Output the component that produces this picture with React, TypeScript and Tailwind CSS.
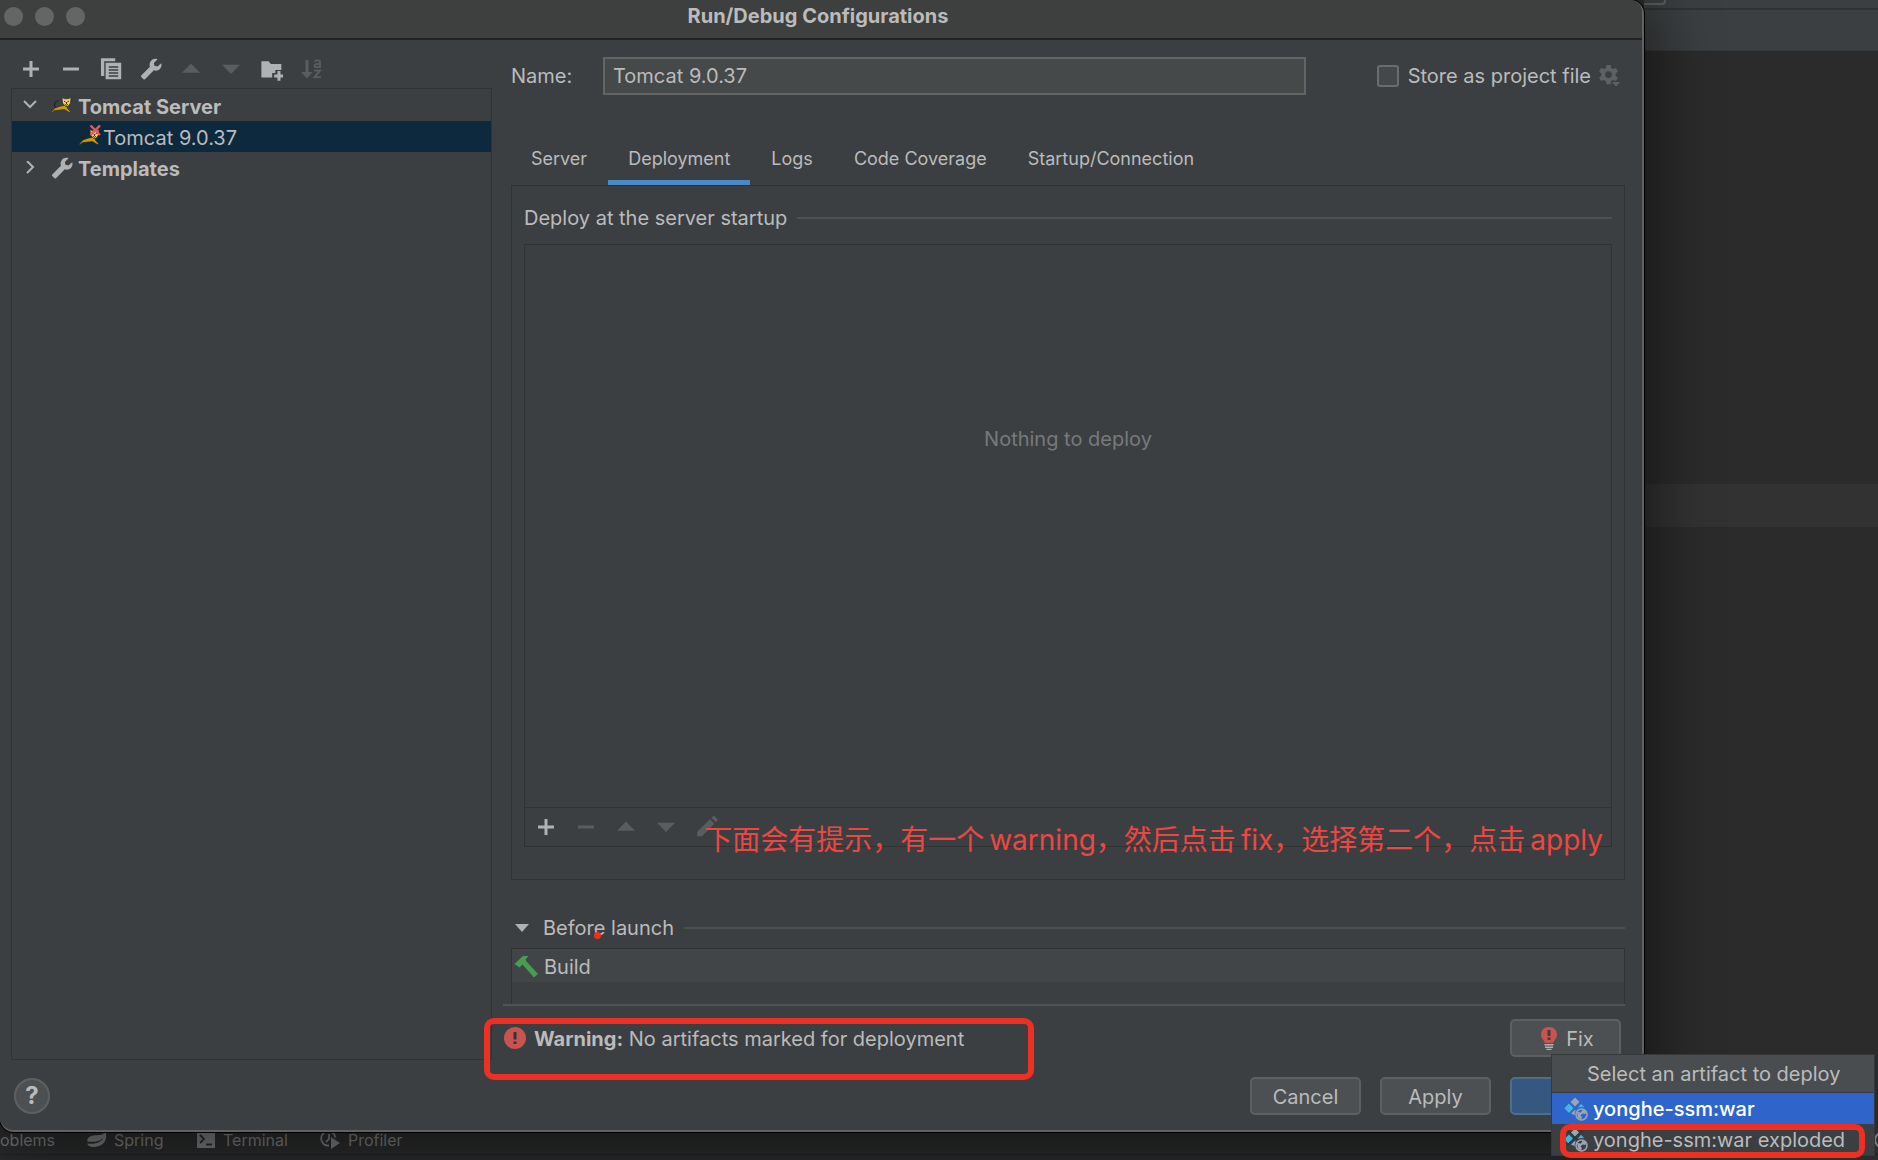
import { useState } from 'react';
import type { ReactNode } from 'react';
import { clsx } from 'clsx';

const TABS = ['Server', 'Deployment', 'Logs', 'Code Coverage', 'Startup/Connection'];
const ARTIFACTS = ['yonghe-ssm:war', 'yonghe-ssm:war exploded'];

type IconProps = { className?: string };

function Icon({ className, children }: IconProps & { children: ReactNode }) {
  return (
    <svg viewBox="0 0 16 16" className={clsx('size-6 shrink-0', className)} fill="currentColor" aria-hidden="true">
      {children}
    </svg>
  );
}

const PlusIcon = ({ className }: IconProps) => (
  <Icon className={className}><path d="M7 2.700h2V7h4.300v2H9v4.300H7V9H2.700V7H7z" /></Icon>
);
const MinusIcon = ({ className }: IconProps) => (
  <Icon className={className}><path d="M2.700 7h10.600v2H2.700z" /></Icon>
);
const CopyIcon = () => (
  <Icon>
    <path d="M1.300.9h9.500v2H3.500v9.700H1.300z" />
    <path fillRule="evenodd" d="M4.400 3.900h10.400v10.900H4.400zM6.500 6.200v.9h6.300v-.9zm0 2v.9h6.300v-.9zm0 2v.9h6.300v-.9zm0 2v.9h6.300v-.9z" />
  </Icon>
);
const WrenchIcon = () => (
  <Icon>
    <path d="M14.800 4.100l-2.500 2.300-2-.5-.4-1.900L12.400 1.500C10.700.8 8.900 1.300 7.900 2.600c-.9 1.200-1.100 2.600-.6 3.900L1.500 12.300c-.3.3-.3.700 0 1l1.500 1.500c.3.3.7.3 1 0L9.900 8.900c1.400.5 2.900.2 4-.9 1-1.100 1.400-2.600.9-3.900z" />
  </Icon>
);
const UpIcon = () => (
  <Icon><path d="M8 4.400l6 6.100H2z" /></Icon>
);
const DownIcon = () => (
  <Icon><path d="M8 11.300l6-6.100H2z" /></Icon>
);
const FolderAddIcon = () => (
  <Icon>
    <path d="M1.600 2.800h4.800l1.500 1.800h7v4h-4v2H8.800v3H1.600z" />
    <path d="M12.300 9.400h2v2.200h2.100v2h-2.100v2.200h-2v-2.200h-2.200v-2h2.200z" />
  </Icon>
);
const SortIcon = () => (
  <svg viewBox="0 0 24 24" className="size-6 shrink-0" aria-hidden="true">
    <path fill="currentColor" d="M6.500 3h3v12h4L8 21.500 2 15h4.500z" />
    <g fill="none" stroke="currentColor" strokeWidth="1.800">
      <path d="M15.500 4.200q3-1.800 5.500 0v6.800M21 7q-5.500-.5-5.500 1.700c0 2.200 4.500 1.900 5.500.2M15 13.700h6l-5.500 6.400H22" />
    </g>
  </svg>
);
const PencilIcon = () => (
  <Icon><path d="M11.600 1.900l1.600-1.500L16 3.200l-1.500 1.600zM10.600 2.900l2.900 2.900-8.200 8.300H2.100v-2.900z" /></Icon>
);

function TomcatIcon({ failed = false }: { failed?: boolean }) {
  return (
    <svg viewBox="0 0 24 24" className="size-6 shrink-0" fill="none" aria-hidden="true">
      <path d="M8 15C3.500 14 3 9 8.500 7.500" stroke="#222" strokeWidth="1.200" />
      <path d="M1 19.500l4-4.500 6-2 6-1 .5 3.500 3.500 3.500-2 .2-4.500-2.700-5 .5-5 .5-2 1.700z" fill="#c99a17" stroke="#3b2c0c" strokeWidth=".6" />
      <path d="M12 4.500l2.500 1.200h3.500l3-1.200-.5 5.500-2.500 3.500h-2.500l-3-3.500z" fill="#f0d264" stroke="#2b2b2b" strokeWidth=".7" />
      <path d="M14 8l1.500 1M19 8l-1.500 1M15 11.500l1.500.8 1.500-.8M16.500 9v2" stroke="#443008" />
      {failed && <path d="M12.500 0.500l9.500 9.500M22 .5L12.500 10" stroke="#e55765" strokeWidth="2.400" />}
    </svg>
  );
}

function ArtifactIcon({ exploded }: { exploded: boolean }) {
  return (
    <svg viewBox="0 0 24 24" className="size-6 shrink-0" fill="none" aria-hidden="true">
      <path d="M11 .5l4.500 4.500L11 9.500 6.500 5z" fill="#9aa7b0" />
      <path d="M5 6.500l4.500 4.700L5 16 .3 11.200z" fill="#40b6e0" />
      <path d="M17 6.800l3.500 3.700c-3-.8-5-.4-7 .5z" fill="#40b6e0" />
      <path d="M11 12.800l.6.600c-.8 1.500-1 3-.8 4.800L7 16.500z" fill="#9aa7b0" />
      {exploded && <path d="M4 2.500l14 14M18 2.500L3.500 17" stroke="#303335" strokeWidth="1.400" />}
      <circle cx="17.500" cy="17.500" r="5.500" stroke="#9aa7b0" strokeWidth="1.500" />
      <path d="M13 15l4 .5 1.500-3 3.500 2-.5 2.500-3-.5-2 2 1.500 1.500-1 2.500-3-2z" fill="#9aa7b0" />
    </svg>
  );
}

function ToolButton({ label, disabled, children }: { label: string; disabled?: boolean; children: ReactNode }) {
  return (
    <button
      type="button"
      aria-label={label}
      disabled={disabled}
      className="text-[#afb1b3] disabled:text-[#5b5c5d]"
    >
      {children}
    </button>
  );
}

function Sidebar() {
  return (
    <aside className="flex w-[481px] shrink-0 flex-col">
      <div className="flex gap-4 px-2">
        <ToolButton label="Add"><PlusIcon /></ToolButton>
        <ToolButton label="Remove"><MinusIcon /></ToolButton>
        <ToolButton label="Copy"><CopyIcon /></ToolButton>
        <ToolButton label="Edit templates"><WrenchIcon /></ToolButton>
        <ToolButton label="Move up" disabled><UpIcon /></ToolButton>
        <ToolButton label="Move down" disabled><DownIcon /></ToolButton>
        <ToolButton label="New folder"><FolderAddIcon /></ToolButton>
        <ToolButton label="Sort" disabled><SortIcon /></ToolButton>
      </div>
      <ul className="mt-[7px] flex-1 border border-[#323232]">
        <li className="flex h-8 items-center pl-[11px] font-bold">
          <svg viewBox="0 0 14 14" className="mr-[13px] size-[14px]" fill="none" stroke="#afb1b3" strokeWidth="2">
            <path d="M1 3l6 6 6-6" />
          </svg>
          <TomcatIcon />
          <span className="ml-1 pt-[3px]">Tomcat Server</span>
        </li>
        <li className="flex h-[31px] items-center bg-[#0d293e] pl-[66px]">
          <TomcatIcon failed />
          <span className="ml-px pt-[3px]">Tomcat 9.0.37</span>
        </li>
        <li className="flex h-[31px] items-center pl-[11px] font-bold">
          <svg viewBox="0 0 14 14" className="mr-[13px] size-[14px]" fill="none" stroke="#afb1b3" strokeWidth="2">
            <path d="M4 0l6 6-6 6" />
          </svg>
          <span className="text-[#afb1b3]"><WrenchIcon /></span>
          <span className="ml-1 pt-[3px]">Templates</span>
        </li>
      </ul>
    </aside>
  );
}

function NameRow() {
  const [name, setName] = useState('Tomcat 9.0.37');
  return (
    <div className="flex h-[38px] items-center pr-[3px]">
      <label htmlFor="config-name" className="w-[92px] shrink-0">Name:</label>
      <input
        id="config-name"
        value={name}
        onChange={e => setName(e.target.value)}
        className="h-full min-w-0 flex-1 border-2 border-[#646464] bg-[#45494a] px-2 outline-none"
      />
      <label className="ml-[71px] flex items-center gap-[9px]">
        <input type="checkbox" className="size-[22px] appearance-none rounded-[3px] border-2 border-[#6b6b6b] bg-[#43494a]" />
        Store as project file
      </label>
      <button type="button" aria-label="Storage settings" disabled className="ml-[7px] text-[#5e6163]">
        <svg viewBox="0 0 24 24" className="size-6" aria-hidden="true">
          <path
            fill="currentColor"
            fillRule="evenodd"
            d="M8.500 1h4l.6 3 1.900 1.100 2.900-1 2 3.400-2.300 2v2.200l2.300 2-2 3.400-2.900-1-1.900 1.100-.6 3h-4l-.6-3L6 16.100l-2.900 1-2-3.400 2.300-2V9.500l-2.300-2 2-3.400 2.900 1L7.900 4zM10.500 7.200a3.400 3.400 0 100 6.800 3.400 3.400 0 000-6.800z"
          />
          <path fill="currentColor" stroke="#3c3f41" d="M13 17.500h10L18 23z" />
        </svg>
      </button>
    </div>
  );
}

function DeploymentPanel() {
  return (
    <section className="flex flex-1 flex-col border border-[#323232] px-3 pt-3 pb-8">
      <div className="flex h-10 items-center gap-[10px]">
        <h2>Deploy at the server startup</h2>
        <div className="h-[2px] flex-1 bg-[#4d5052]" />
      </div>
      <div className="mt-[6px] flex flex-1 flex-col border border-[#323232]">
        <p className="flex-1 pt-[182px] text-center text-[#777a7b]">Nothing to deploy</p>
        <div className="relative flex h-[39px] items-center gap-4 border-t border-[#323232] px-[9px]">
          <ToolButton label="Add artifact"><PlusIcon /></ToolButton>
          <ToolButton label="Remove artifact" disabled><MinusIcon /></ToolButton>
          <ToolButton label="Artifact up" disabled><UpIcon /></ToolButton>
          <ToolButton label="Artifact down" disabled><DownIcon /></ToolButton>
          <ToolButton label="Edit artifact" disabled><PencilIcon /></ToolButton>
          <p className="absolute top-3 right-2 text-[28px] leading-10 whitespace-nowrap text-[#ec4743]">
            下面会有提示，有一个<span className="ml-[5px]">warning</span>，然后点击
            <span className="ml-[5px]">fix</span>，选择第二个，点击<span className="ml-[5px]">apply</span>
          </p>
        </div>
      </div>
    </section>
  );
}

function BeforeLaunch() {
  return (
    <section className="mt-7">
      <div className="flex h-10 items-center">
        <svg viewBox="0 0 14 10" className="mr-[14px] ml-1 h-[10px] w-[14px]" aria-hidden="true">
          <path d="M0 1h14L7 9z" fill="#afb1b3" />
        </svg>
        <h2 className="relative">
          Before launch
          <span className="absolute top-4 left-[51px] size-[7px] rounded-full bg-[#ed3024]" />
        </h2>
        <div className="ml-[10px] h-[2px] flex-1 bg-[#4d5052]" />
      </div>
      <div className="h-14 border border-b-0 border-[#323232]">
        <div className="flex h-[33px] items-center gap-[6px] bg-[#414547] pl-[2px]">
          <svg viewBox="0 0 24 24" className="size-6" fill="#499c54" aria-hidden="true">
            <path d="M.5 10L9 2h5.500l-3 3.500 1 2L24 20l-4 3.500L8.500 10.500l-3 3z" />
          </svg>
          <span className="pt-[2px]">Build</span>
        </div>
      </div>
      <div className="-ml-2 h-[2px] bg-[#515354]" />
    </section>
  );
}

function ArtifactPopup() {
  const [selected, setSelected] = useState(0);
  return (
    <div className="absolute top-[35px] left-[41px] z-20 w-[324px] border border-[#36393b] bg-[#3c3f41]">
      <h3 className="flex h-[38px] items-center border-b border-[#36393b] bg-[#494d50] pl-[35px] whitespace-nowrap">
        Select an artifact to deploy
      </h3>
      <div className="relative">
        {ARTIFACTS.map((artifact, i) => (
          <button
            key={artifact}
            type="button"
            onClick={() => setSelected(i)}
            className={clsx(
              'flex h-[31px] w-full items-center gap-[5px] pl-3 whitespace-nowrap',
              i === selected && 'bg-[#2f65ca] font-medium text-white',
            )}
          >
            <ArtifactIcon exploded={i === 1} />
            {artifact}
          </button>
        ))}
        <div className="pointer-events-none absolute top-[31px] right-[9px] left-2 h-[34px] rounded-[10px] border-[6px] border-[#ed3024]" />
      </div>
    </div>
  );
}

function WarningRow() {
  return (
    <div className="relative mt-[13px] flex h-[38px] items-center">
      <svg viewBox="0 0 22 22" className="ml-[-7px] size-[22px]" aria-hidden="true">
        <circle cx="11" cy="11" r="11" fill="#c75450" />
        <path d="M9.500 5h3v7.500h-3zM9.500 14.500h3v2.500h-3z" fill="#323435" />
      </svg>
      <p className="ml-2 pt-[2px]">
        <strong>Warning:</strong> No artifacts marked for deployment
      </p>
      <div className="pointer-events-none absolute top-[-1px] left-[-27px] h-[62px] w-[550px] rounded-[10px] border-[6px] border-[#ed3024]" />
      <div className="relative mr-1 ml-auto">
        <button
          type="button"
          className="flex h-[38px] w-[111px] items-center justify-center gap-[5px] rounded-[5px] border-2 border-[#5e6060] bg-[#4c5052]"
        >
          <svg viewBox="0 0 24 24" className="size-6" aria-hidden="true">
            <path d="M12 1c5 0 8 3.500 8 7.500 0 3-1.500 4.500-3 6.500l-1 2H8l-1-2c-1.500-2-3-3.500-3-6.500C4 4.500 7 1 12 1z" fill="#c75450" />
            <path d="M10.500 4h3v6h-3zM10.500 11.500h3V14h-3z" fill="#3c3f41" />
            <path d="M7.500 18h9v1.500h-9zM8 20.500h8V22H8zM9.500 22.800h5V24h-5z" fill="#afb1b3" />
          </svg>
          <span className="pt-[2px]">Fix</span>
        </button>
        <ArtifactPopup />
      </div>
    </div>
  );
}

function DialogFooter() {
  const button = 'h-[38px] w-[111px] rounded-[5px] border-2 border-[#5e6060] bg-[#4c5052] pt-[2px]';
  return (
    <footer className="flex h-[68px] items-center gap-[19px] pr-[21px] pl-[14px]">
      <button
        type="button"
        aria-label="Help"
        className="mr-auto flex size-9 items-center justify-center rounded-full border-2 border-[#5e6060] bg-[#4c5052] text-2xl font-bold"
      >
        ?
      </button>
      <button type="button" className={button}>Cancel</button>
      <button type="button" className={button}>Apply</button>
      <button
        type="button"
        aria-label="OK"
        className="h-[38px] w-[111px] rounded-[5px] border-2 border-[#4c708c] bg-[#365880]"
      />
    </footer>
  );
}

function Dialog() {
  const [tab, setTab] = useState('Deployment');
  return (
    <main className="relative z-10 flex min-w-0 flex-1 flex-col rounded-tr-[14px] rounded-bl-[14px] border-r-2 border-b-2 border-[#606263] bg-[#3c3f41] shadow-[0_0_0_1px_#000,0_8px_60px_12px_rgba(0,0,0,0.5)]">
      <header className="relative flex h-10 items-center rounded-tr-[12px] border-b-2 border-[#222] bg-[#3e403f] pr-2 pb-[6px]">
        <div className="flex gap-3 pl-1">
          <span className="size-[19px] rounded-full bg-[#646665]" />
          <span className="size-[19px] rounded-full bg-[#646665]" />
          <span className="size-[19px] rounded-full bg-[#646665]" />
        </div>
        <h1 className="mr-[83px] flex-1 text-center font-bold">Run/Debug Configurations</h1>
      </header>
      <div className="flex flex-1 gap-[19px] pt-[17px] pr-[17px] pb-[2px] pl-[11px]">
        <Sidebar />
        <div className="flex min-w-0 flex-1 flex-col">
          <NameRow />
          <nav role="tablist" className="mt-[38px] flex h-[52px] gap-px text-[18px]">
            {TABS.map(t => (
              <button
                key={t}
                type="button"
                role="tab"
                aria-selected={t === tab}
                onClick={() => setTab(t)}
                className={clsx('border-b-[5px] px-5 pt-1', t === tab ? 'border-[#4a88c7]' : 'border-transparent')}
              >
                {t}
              </button>
            ))}
          </nav>
          <DeploymentPanel />
          <BeforeLaunch />
          <WarningRow />
          <div className="h-[3px]" />
        </div>
      </div>
      <DialogFooter />
    </main>
  );
}

// Slice of the IDE window that stays visible to the right of the dialog
function EditorStrip() {
  return (
    <div className="flex w-[234px] shrink-0 flex-col bg-[#2b2b2b]">
      <div className="h-[10px] border-b-2 border-[#303234] bg-[#3c3f41]">
        <div className="h-[5px] w-[22px] rounded-br-[4px] border-r-2 border-b-2 border-[#5e6060]" />
      </div>
      <div className="h-[41px] border-b border-[#35383a] bg-[#3c3f41]" />
      <div className="mt-[433px] h-[43px] bg-[#323232]" />
    </div>
  );
}

function StatusBar() {
  return (
    <footer className="h-7 bg-[#2b2c2d]">
      <div className="flex h-[23px] items-center border-b border-[#232424] pb-[6px] text-[16px] leading-4 text-[#7b7d7e]">
        <span className="w-[87px]">oblems</span>
        <span className="flex w-[110px] items-center gap-[7px]">
          <svg viewBox="0 0 20 16" className="h-4 w-5" fill="currentColor" aria-hidden="true">
            <path d="M18.500 0c1.500 5 .5 9.500-3.500 12.500-3 2.200-7 2.500-9.500 2.500-3-.2-5-1.800-5.300-3.500C9 13 15 9 16.500 6 12 9.500 7 10.500.3 9.500 0 6 3 3.500 8 3.300 13 3 16 3 18.500 0z" />
          </svg>
          Spring
        </span>
        <span className="flex w-[123px] items-center gap-2">
          <svg viewBox="0 0 18 16" className="h-4 w-[18px]" aria-hidden="true">
            <path d="M0 0h18v16H0z" fill="currentColor" />
            <path d="M3 3l4 4-4 4M9 12.500h6" fill="none" stroke="#2b2c2d" strokeWidth="1.800" />
          </svg>
          Terminal
        </span>
        <span className="flex items-center gap-[6px]">
          <svg viewBox="0 0 22 20" className="h-5 w-[22px]" fill="none" aria-hidden="true">
            <path d="M9 15.500A7 7 0 014 3M8 1.500a7 7 0 017.500 6M9 4v5l-3 3" stroke="currentColor" strokeWidth="1.800" />
            <path d="M11 7l9 6-9 6z" fill="currentColor" />
          </svg>
          Profiler
        </span>
        <svg viewBox="0 0 16 16" className="-mr-3 ml-auto size-4" fill="none" stroke="currentColor" strokeWidth="2" aria-hidden="true">
          <circle cx="8" cy="8" r="7" />
        </svg>
      </div>
    </footer>
  );
}

export default function App() {
  return (
    <div className="flex min-h-screen flex-col overflow-hidden bg-[#2b2b2b] font-['Inter','Noto_Sans_CJK_SC',sans-serif] text-[20px] leading-6 text-[#bbbbbb]">
      <div className="flex flex-1">
        <Dialog />
        <EditorStrip />
      </div>
      <StatusBar />
    </div>
  );
}
